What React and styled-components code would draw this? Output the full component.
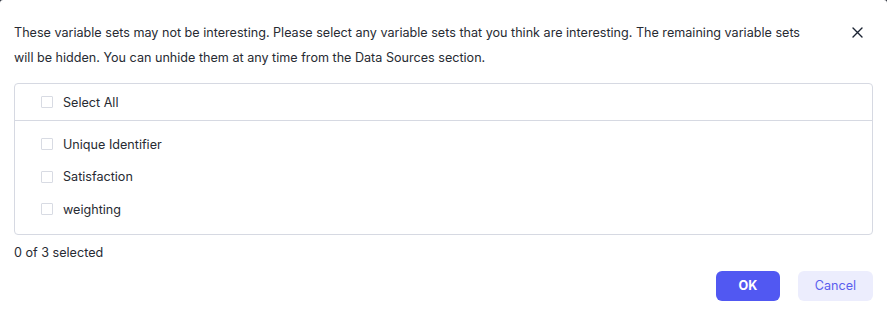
import React, { useState } from "react";
import styled, { createGlobalStyle } from "styled-components";

const GlobalStyle = createGlobalStyle`
  html, body {
    margin: 0;
    padding: 0;
    background: #2b2f3a;
  }
  body {
    font-family: Inter, "Noto Sans", sans-serif;
    color: #272b33;
    -webkit-font-smoothing: antialiased;
  }
`;

const Modal = styled.div`
  background: #fff;
  width: 887px;
  height: 313px;
  border-radius: 3px 3px 0 0;
  box-sizing: border-box;
  padding: 20px 14px 0 14px;
  display: flex;
  flex-direction: column;
`;

const Header = styled.div`
  display: flex;
  justify-content: space-between;
  align-items: flex-start;
`;

const Message = styled.p`
  margin: 0;
  width: 806px;
  font-size: 12.6px;
  line-height: 25px;
  color: #272b33;
`;

const CloseButton = styled.button`
  border: none;
  background: none;
  padding: 0;
  margin: 4px 8px 0 0;
  width: 16px;
  height: 16px;
  display: flex;
  align-items: center;
  justify-content: center;
  cursor: pointer;
`;

const ListBox = styled.div`
  margin-top: 13px;
  border: 1px solid #d6d9e2;
  border-radius: 4px;
  display: flex;
  flex-direction: column;
`;

const HeaderRow = styled.div`
  border-bottom: 1px solid #d6d9e2;
  padding: 9px 0 9px 26px;
  display: flex;
`;

const Items = styled.div`
  padding: 7px 0 8px 26px;
  display: flex;
  flex-direction: column;
`;

const Option = styled.label`
  display: flex;
  align-items: center;
  height: ${(p) => (p.tall ? "18px" : "32.5px")};
  gap: 10px;
  font-size: 12.6px;
  color: #272b33;
  cursor: pointer;
`;

const Box = styled.span`
  width: 10px;
  height: 10px;
  border: 1px solid #d8dbe3;
  border-radius: 1px;
  background: ${(p) => (p.checked ? "#5058f0" : "#fff")};
  flex: none;
`;

const Count = styled.div`
  margin-top: 10px;
  font-size: 12.6px;
  color: #272b33;
`;

const Footer = styled.div`
  margin-top: 11px;
  display: flex;
  justify-content: flex-end;
  gap: 18px;
`;

const Button = styled.button`
  height: 30px;
  border: none;
  border-radius: 6px;
  font-family: Inter, "Noto Sans", sans-serif;
  font-size: 12.6px;
  font-weight: ${(p) => (p.primary ? 700 : 400)};
  background: ${(p) => (p.primary ? "#5158f2" : "#ecedfd")};
  color: ${(p) => (p.primary ? "#ffffff" : "#5a60ee")};
  width: ${(p) => (p.primary ? "64px" : "75px")};
  cursor: pointer;
`;

const variables = ["Unique Identifier", "Satisfaction", "weighting"];

export default function App() {
  const [selected] = useState([]);
  return (
    <>
      <GlobalStyle />
      <Modal>
        <Header>
          <Message>
            These variable sets may not be interesting. Please select any variable sets that you think are
            interesting. The remaining variable sets will be hidden. You can unhide them at any time from the Data
            Sources section.
          </Message>
          <CloseButton aria-label="Close">
            <svg width="11" height="11" viewBox="0 0 11 11">
              <path d="M1 1L10 10M10 1L1 10" stroke="#1c2433" strokeWidth="1.4" strokeLinecap="round" />
            </svg>
          </CloseButton>
        </Header>
        <ListBox>
          <HeaderRow>
            <Option tall>
              <Box />
              Select All
            </Option>
          </HeaderRow>
          <Items>
            {variables.map((v) => (
              <Option key={v}>
                <Box checked={selected.includes(v)} />
                {v}
              </Option>
            ))}
          </Items>
        </ListBox>
        <Count>
          {selected.length} of {variables.length} selected
        </Count>
        <Footer>
          <Button primary>OK</Button>
          <Button>Cancel</Button>
        </Footer>
      </Modal>
    </>
  );
}
